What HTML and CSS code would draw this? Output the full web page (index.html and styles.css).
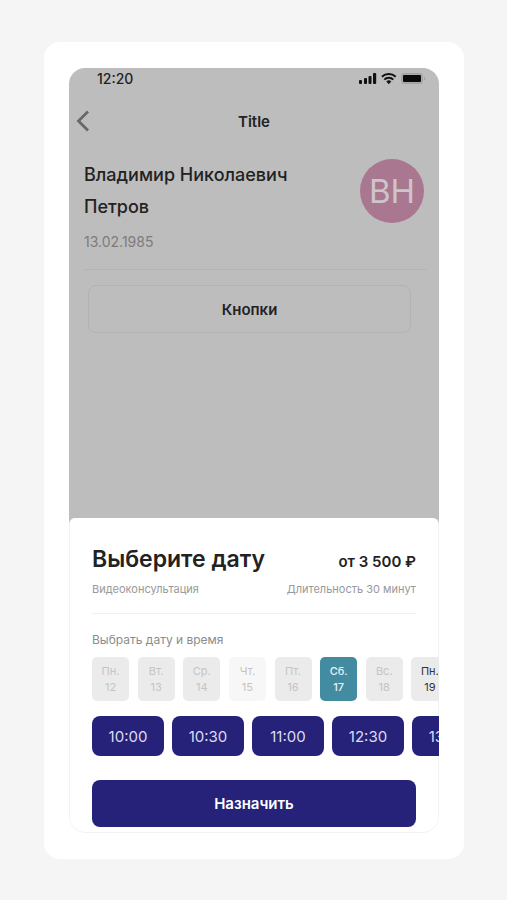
FILE: index.html
```html
<!DOCTYPE html>
<html lang="ru">
<head>
<meta charset="utf-8">
<meta name="viewport" content="width=device-width, initial-scale=1">
<title>Выберите дату</title>
<link rel="stylesheet" href="styles.css">
</head>
<body>
<main class="card">
  <div class="phone">
    <section class="profile">
      <div class="status">
        <span>12:20</span>
        <svg class="status-icons" viewBox="0 0 68 14" width="68" height="14" aria-hidden="true">
          <g fill="#111">
            <rect x="0" y="9" width="3" height="4" rx="1"/>
            <rect x="5" y="7" width="3" height="6" rx="1"/>
            <rect x="9.500" y="5" width="3" height="8" rx="1"/>
            <rect x="14" y="2" width="3.200" height="11" rx="1"/>
            <path d="M29.800 13.200 27.300 10.500a3.500 3.500 0 0 1 5 0z"/>
          </g>
          <g fill="none" stroke="#111" stroke-width="2">
            <path d="M22.900 5.700a10 10 0 0 1 13.800 0"/>
            <path d="M25.300 8.600a6.400 6.400 0 0 1 9 0"/>
          </g>
          <rect x="42.500" y="2.500" width="21" height="10" rx="2.500" fill="#aaa" stroke="#a2a2a2"/>
          <rect x="44" y="4" width="18" height="7" rx="1" fill="#0b0b0b"/>
          <path d="M65 6v3.500q1.500-.5 1.500-1.700T65 6z" fill="#a2a2a2"/>
        </svg>
      </div>
      <header class="navbar">
        <button class="back" type="button" aria-label="Назад">
          <svg viewBox="0 0 14 22" width="14" height="22" aria-hidden="true"><path d="M12 1.500 2.500 11l9.500 9.500" fill="none" stroke="#686868" stroke-width="2.800"/></svg>
        </button>
        <h1 class="nav-title">Title</h1>
      </header>
      <div class="person">
        <div>
          <h2 class="name">Владимир Николаевич Петров</h2>
          <p class="birth">13.02.1985</p>
        </div>
        <div class="avatar">ВН</div>
      </div>
      <button class="outline" type="button">Кнопки</button>
    </section>
    <section class="sheet">
      <div class="row">
        <h2 class="heading">Выберите дату</h2>
        <strong class="price">от 3 500 ₽</strong>
      </div>
      <div class="row meta">
        <span>Видеоконсультация</span>
        <span>Длительность 30 минут</span>
      </div>
      <p class="label">Выбрать дату и время</p>
      <div class="days">
        <button class="day" type="button" disabled>Пн.<br>12</button>
        <button class="day" type="button" disabled>Вт.<br>13</button>
        <button class="day" type="button" disabled>Ср.<br>14</button>
        <button class="day faint" type="button" disabled>Чт.<br>15</button>
        <button class="day" type="button" disabled>Пт.<br>16</button>
        <button class="day selected" type="button">Сб.<br>17</button>
        <button class="day" type="button" disabled>Вс.<br>18</button>
        <button class="day open" type="button">Пн.<br>19</button>
      </div>
      <div class="times">
        <button class="time" type="button">10:00</button>
        <button class="time" type="button">10:30</button>
        <button class="time" type="button">11:00</button>
        <button class="time" type="button">12:30</button>
        <button class="time" type="button">13:00</button>
      </div>
      <button class="submit" type="button">Назначить</button>
    </section>
  </div>
</main>
</body>
</html>
```
FILE: styles.css
```css
* {
  box-sizing: border-box;
}

body {
  margin: 0;
  padding: 42px 43px 40px 44px;
  background: #f5f5f5;
  color: #222;
  font-family: Inter, "Liberation Sans", sans-serif;
}

h1,
h2,
p {
  margin: 0;
}

button {
  padding: 0;
  border: 0;
  background: none;
  color: inherit;
  font: inherit;
}

.card {
  padding: 26px 25px;
  border-radius: 16px;
  background: #fff;
}

.phone {
  overflow: hidden;
  border-radius: 16px;
}

.profile {
  min-height: 458px;
  background: #bdbdbd;
}

.status {
  display: flex;
  justify-content: space-between;
  align-items: center;
  height: 20px;
  padding: 0 12px 0 28px;
  font-size: 14px;
  font-weight: 500;
}

.navbar {
  display: grid;
  grid-template-columns: 30px 1fr 30px;
  align-items: center;
  height: 66px;
  padding: 0 7px;
}

.back {
  display: flex;
}

.nav-title {
  font-size: 15px;
  font-weight: 600;
  text-align: center;
}

.person {
  display: flex;
  justify-content: space-between;
  gap: 16px;
  margin: 0 12px 0 15px;
  padding: 5px 3px 17px 0;
  border-bottom: 1px solid #b4b4b4;
}

.name {
  font-size: 18px;
  font-weight: 500;
  line-height: 32px;
}

.birth {
  margin-top: 9px;
  color: #7c7c7c;
  font-size: 14px;
  line-height: 20px;
}

.avatar {
  flex: none;
  width: 64px;
  height: 64px;
  border-radius: 50%;
  background: #aa7790;
  color: #ccc5ca;
  font-size: 33px;
  line-height: 64px;
  text-align: center;
}

.outline {
  display: block;
  width: calc(100% - 47px);
  height: 48px;
  margin: 15px 28px 0 19px;
  border: 1px solid #b3b3b3;
  border-radius: 8px;
  font-size: 15px;
  font-weight: 600;
}

.sheet {
  margin-top: -8px;
  padding: 25px 22px 5px;
  border: 1px solid #f3f3f3;
  border-top: 0;
  border-radius: 6px 6px 16px 16px;
  background: #fff;
}

.row {
  display: flex;
  justify-content: space-between;
  align-items: baseline;
}

.heading {
  font-size: 23px;
  font-weight: 600;
  line-height: 32px;
}

.price {
  font-size: 15px;
  font-weight: 600;
}

.meta {
  padding: 6px 0 16px;
  border-bottom: 1px solid #f0f0f0;
  color: #999;
  font-size: 11px;
  line-height: 16px;
}

.label {
  margin-top: 16px;
  color: #8c8c8c;
  font-size: 12px;
  line-height: 20px;
}

.days {
  display: flex;
  justify-content: space-between;
  width: 110%;
  margin-top: 7px;
}

.day {
  width: 37px;
  height: 44px;
  border-radius: 5px;
  background: #ebebeb;
  color: #c4c4c4;
  font-size: 11px;
  line-height: 16px;
}

.faint {
  background: #f7f7f7;
}

.selected {
  background: #438ba0;
  color: #e4f2f6;
  font-weight: 500;
}

.open {
  color: #333;
}

.times {
  display: flex;
  gap: 8px;
  margin: 15px -23px 0 0;
  overflow: hidden;
}

.time {
  flex: none;
  width: 72px;
  height: 40px;
  border-radius: 8px;
  background: #262279;
  color: #dddcf0;
  font-size: 15px;
}

.submit {
  width: 100%;
  height: 47px;
  margin-top: 24px;
  border-radius: 8px;
  background: #262279;
  color: #fff;
  font-size: 15px;
  font-weight: 600;
}
```
